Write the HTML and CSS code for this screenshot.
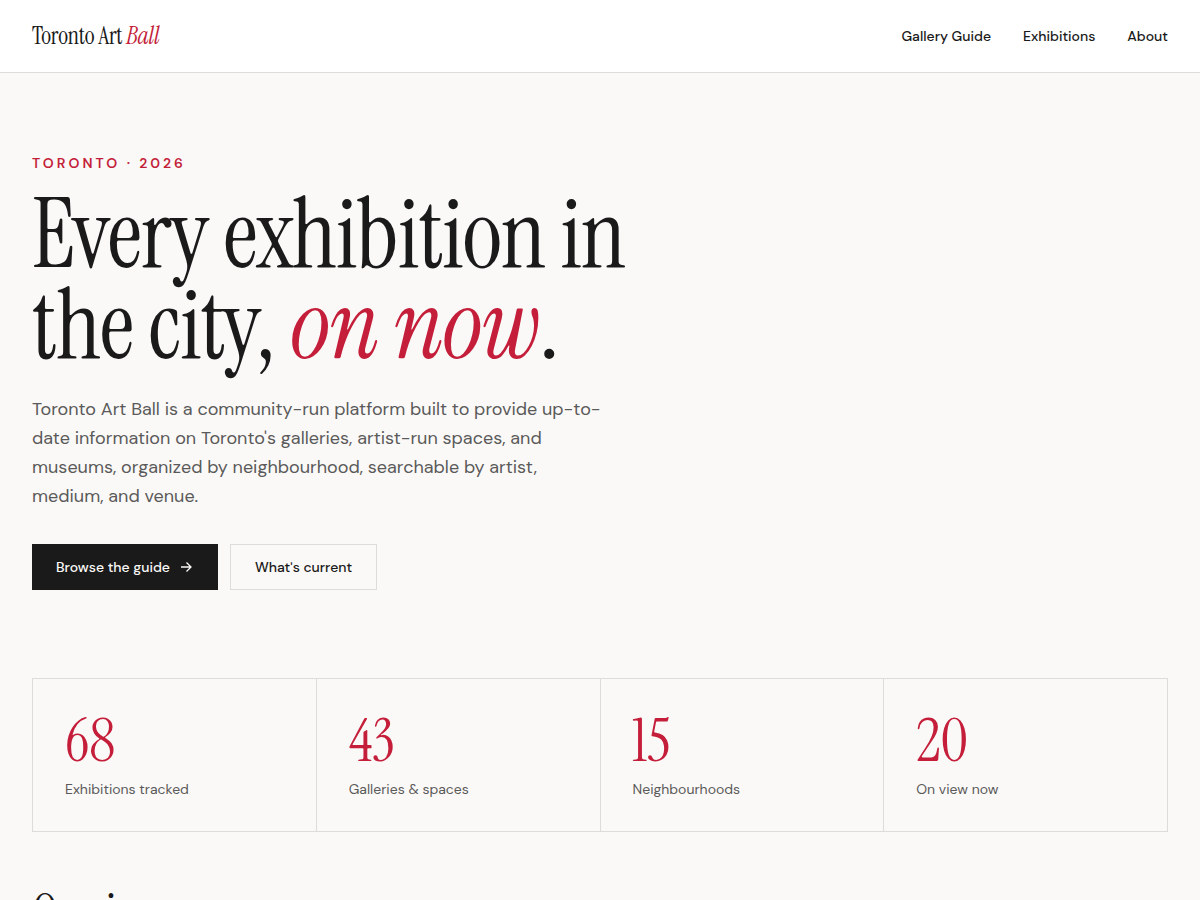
FILE: index.html
```html
<!DOCTYPE html>
<html lang="en">
<head>
    <meta charset="UTF-8">
    <meta name="viewport" content="width=device-width, initial-scale=1.0">
    <title>Toronto Art Ball</title>
    <link rel="stylesheet" href="styles.css">
</head>
<body>

<header class="site-header">
    <a class="logo" href="#">Toronto Art <em>Ball</em></a>
    <nav class="site-nav">
        <a href="#guide">Gallery Guide</a>
        <a href="#exhibitions">Exhibitions</a>
        <a href="#about">About</a>
    </nav>
</header>

<main>
    <section class="hero">
        <p class="eyebrow">Toronto · 2026</p>
        <h1>Every exhibition in the city, <em>on now</em>.</h1>
        <p class="lead">Toronto Art Ball is a community-run platform built to provide up-to-date information on Toronto's galleries, artist-run spaces, and museums, organized by neighbourhood, searchable by artist, medium, and venue.</p>
        <div class="actions">
            <a class="btn btn-dark" href="#guide">
                Browse the guide
                <svg width="16" height="16" viewBox="0 0 16 16" fill="none" stroke="currentColor" stroke-width="1.3" aria-hidden="true">
                    <path d="M3 8h10M8.5 3.5L13 8l-4.5 4.5"/>
                </svg>
            </a>
            <a class="btn btn-outline" href="#exhibitions">What's current</a>
        </div>
    </section>

    <section class="stats">
        <div class="stat">
            <div class="stat-number">68</div>
            <div class="stat-label">Exhibitions tracked</div>
        </div>
        <div class="stat">
            <div class="stat-number">43</div>
            <div class="stat-label">Galleries &amp; spaces</div>
        </div>
        <div class="stat">
            <div class="stat-number">15</div>
            <div class="stat-label">Neighbourhoods</div>
        </div>
        <div class="stat">
            <div class="stat-number">20</div>
            <div class="stat-label">On view now</div>
        </div>
    </section>

    <section class="on-view" id="exhibitions">
        <h2>On view</h2>
    </section>
</main>

</body>
</html>
```
FILE: styles.css
```css
* {
    box-sizing: border-box;
}

body {
    margin: 0;
    background-color: #faf9f7;
    color: #1a1a1a;
    font-family: "DM Sans", Inter, sans-serif;
    font-optical-sizing: none;
    font-size: 14px;
    line-height: 24px;
}

a {
    color: inherit;
    text-decoration: none;
}

h1, h2, p {
    margin: 0;
}

h1, h2, .logo, .stat-number {
    font-family: "Instrument Serif", "Liberation Serif", serif;
    font-weight: 400;
}

h1, h2, .logo {
    letter-spacing: -0.01em;
}

.logo em, h1 em {
    color: #c41e3a;
}

.site-header {
    display: flex;
    justify-content: space-between;
    align-items: center;
    padding: 24px 32px;
    background-color: #fff;
    border-bottom: 1px solid #dddcda;
}

.logo {
    font-size: 24px;
}

.site-nav {
    display: flex;
    gap: 32px;
    font-weight: 500;
}

main {
    padding: 0 32px;
}

.hero {
    padding: 80px 0 88px;
}

.eyebrow {
    margin-bottom: 16px;
    line-height: 20px;
    color: #c41e3a;
    font-weight: 600;
    letter-spacing: 3px;
    text-transform: uppercase;
}

h1 {
    max-width: 640px;
    margin-bottom: 24px;
    font-size: 96px;
    line-height: 91px;
}

.lead {
    max-width: 580px;
    margin-bottom: 33px;
    color: #5a5a5a;
    font-size: 18px;
    line-height: 29px;
}

.actions {
    display: flex;
    gap: 12px;
}

.btn {
    display: flex;
    align-items: center;
    gap: 8px;
    padding: 10px 24px;
    font-weight: 500;
}

.btn-dark {
    background-color: #1a1a1a;
    color: #faf9f7;
}

.btn-outline {
    border: 1px solid #dddcda;
}

/* the 1px gaps show the background as divider lines */
.stats {
    display: grid;
    grid-template-columns: repeat(4, 1fr);
    gap: 1px;
    background-color: #dddcda;
    border: 1px solid #dddcda;
}

.stat {
    padding: 32px;
    background-color: #faf9f7;
}

.stat-number {
    margin-bottom: 8px;
    color: #c41e3a;
    font-size: 60px;
    line-height: 60px;
}

.stat-label {
    color: #5a5a5a;
    line-height: 20px;
}

.on-view {
    padding: 56px 0 80px;
}

h2 {
    font-size: 48px;
    line-height: 48px;
}
```
